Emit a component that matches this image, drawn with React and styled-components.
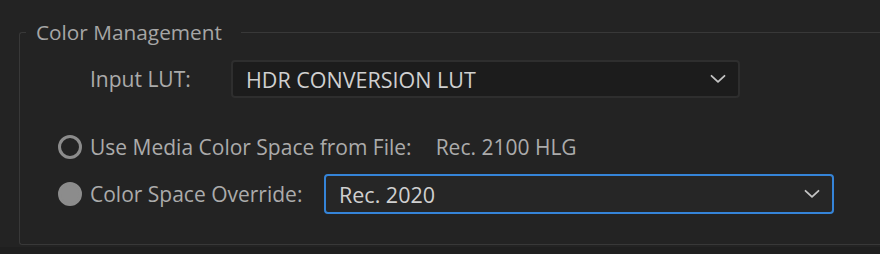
import React from 'react';
import styled, { createGlobalStyle } from 'styled-components';

const GlobalStyle = createGlobalStyle`
  html, body {
    margin: 0;
    padding: 0;
    background: #232323;
    overflow: hidden;
  }
  body {
    font-family: "Open Sans", "Noto Sans", sans-serif;
  }
`;

const Page = styled.div`
  width: 880px;
  height: 254px;
  background: #1f1f1f;
  overflow: hidden;
`;

const Panel = styled.div`
  height: 247px;
  background: #232323;
  padding: 22px 0 0 19px;
  box-sizing: border-box;
`;

const Group = styled.fieldset`
  margin: 0 -20px 0 0;
  padding: 0 0 30px 0;
  border: 1px solid #383838;
  border-right: none;
  border-radius: 3px 0 0 3px;
  min-inline-size: 0;
`;

const Legend = styled.legend`
  margin-left: 6px;
  padding: 0 19px 0 10px;
  font-size: 20.8px;
  line-height: 20px;
  color: #a6a6a6;
`;

const Row = styled.div`
  display: flex;
  align-items: center;
  height: ${p => p.$h}px;
  margin-top: ${p => p.$top}px;
  padding-left: ${p => p.$indent}px;
`;

const Label = styled.span`
  font-size: 21px;
  color: #ababab;
  width: ${p => (p.$w ? `${p.$w}px` : 'auto')};
  flex-shrink: 0;
  white-space: nowrap;
`;

const Value = styled.span`
  font-size: 21px;
  color: #ababab;
  margin-left: 24px;
`;

const Radio = styled.span`
  width: 24px;
  height: 24px;
  box-sizing: border-box;
  border-radius: 50%;
  margin-right: 8px;
  flex-shrink: 0;
  border: 3px solid #8c8c8c;
  background: ${p => (p.$on ? '#8c8c8c' : 'transparent')};
`;

const Select = styled.div`
  display: flex;
  align-items: center;
  justify-content: space-between;
  box-sizing: border-box;
  width: ${p => p.$w}px;
  height: ${p => p.$h}px;
  padding: 0 12px 0 13px;
  border-radius: 4px;
  border: ${p => (p.$focus ? '2px solid #3584d8' : '2px solid #2e2e2e')};
  background: ${p => (p.$focus ? '#262626' : '#1c1c1c')};
  color: #d0d0d0;
  font-size: 21.5px;
  white-space: nowrap;
`;

const Chevron = () => (
  <svg width="16" height="10" viewBox="0 0 16 10" fill="none">
    <path d="M1.5 1.8 L8 7.8 L14.5 1.8" stroke="#c4c4c4" strokeWidth="1.8" strokeLinecap="round" strokeLinejoin="round" />
  </svg>
);

export default function App() {
  return (
    <Page>
      <GlobalStyle />
      <Panel>
        <Group>
          <Legend>Color Management</Legend>
          <Row $h={38} $top={18} $indent={70}>
            <Label $w={141}>Input LUT:</Label>
            <Select $w={509} $h={38}>
              HDR CONVERSION LUT
              <Chevron />
            </Select>
          </Row>
          <Row $h={30} $top={34} $indent={38}>
            <Radio />
            <Label>Use Media Color Space from File:</Label>
            <Value>Rec. 2100 HLG</Value>
          </Row>
          <Row $h={40} $top={12} $indent={38}>
            <Radio $on />
            <Label $w={234}>Color Space Override:</Label>
            <Select $w={510} $h={40} $focus>
              Rec. 2020
              <Chevron />
            </Select>
          </Row>
        </Group>
      </Panel>
    </Page>
  );
}
